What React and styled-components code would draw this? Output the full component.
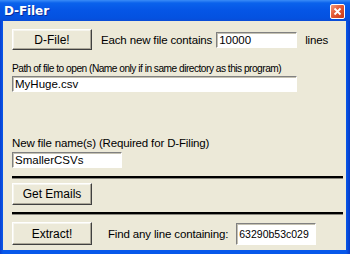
import styled, { createGlobalStyle } from 'styled-components';

const GlobalStyle = createGlobalStyle`
  html, body {
    margin: 0;
    padding: 0;
  }
  body {
    width: 350px;
    height: 254px;
    overflow: hidden;
    background: #fff;
    font-family: "Liberation Sans", Arial, sans-serif;
  }
`;

const Window = styled.div`
  width: 350px;
  height: 254px;
  display: flex;
  flex-direction: column;
  background: linear-gradient(90deg, #0a3fd0 0px, #0758ea 3px, #0758ea 346px, #0639c6 350px);
`;

const TitleBar = styled.div`
  height: 21px;
  flex: none;
  display: flex;
  align-items: center;
  justify-content: space-between;
  padding: 0 5px 0 4px;
  background: linear-gradient(180deg, #3a8cf7 0px, #0a62ec 3px, #0556e6 10px, #0452e0 18px, #0a4bd6 21px);
`;

const Title = styled.span`
  color: #fff;
  font-family: "DejaVu Sans", "Liberation Sans", sans-serif;
  font-weight: bold;
  font-size: 12px;
  letter-spacing: -0.1px;
  text-shadow: 1px 1px 0 #0a2c9a;
  margin-top: 1px;
`;

const CloseButton = styled.div`
  width: 13px;
  height: 13px;
  border: 1px solid #fff;
  border-radius: 2px;
  background: linear-gradient(135deg, #f39a7c 0%, #e45a35 45%, #c8391a 100%);
  display: flex;
  align-items: center;
  justify-content: center;
  margin-top: 2px;
`;

const Frame = styled.div`
  flex: 1;
  display: flex;
  padding: 0 4px 4px 3px;
`;

const Body = styled.div`
  flex: 1;
  background: #ece9d8;
  display: flex;
  flex-direction: column;
  padding: 8px 3px 0 9px;
  font-size: 11.5px;
  color: #000;
`;

const Row = styled.div`
  display: flex;
  align-items: center;
  margin-top: ${(p) => p.$mt || 0}px;
`;

const Button = styled.button`
  width: 80px;
  height: ${(p) => p.$h || 21}px;
  box-sizing: border-box;
  flex: none;
  padding: 0;
  background: #ece9d8;
  font-family: "Liberation Sans", Arial, sans-serif;
  font-size: 12px;
  color: #000;
  border: 1px solid;
  border-color: #fff #404040 #404040 #fff;
  box-shadow: inset -1px -1px 0 #aca899, inset 1px 1px 0 #f6f5ee;
`;

const Label = styled.span`
  white-space: nowrap;
  margin-left: ${(p) => p.$ml || 0}px;
  margin-top: ${(p) => p.$mt || 0}px;
  font-size: 11.5px;
  letter-spacing: -0.15px;
`;

const NarrowLabel = styled.div`
  white-space: nowrap;
  font-family: "Liberation Sans", Arial, sans-serif;
  font-size: 11px;
  letter-spacing: -0.55px;
  transform: scaleX(0.925);
  transform-origin: left center;
  margin-top: ${(p) => p.$mt || 0}px;
`;

const Input = styled.div`
  width: ${(p) => p.$w}px;
  height: ${(p) => p.$h || 16}px;
  box-sizing: border-box;
  flex: none;
  background: #fff;
  border: 1px solid;
  border-color: #808080 #fff #fff #808080;
  box-shadow: inset 1px 1px 0 #c4c1b2;
  padding: 0 0 0 2px;
  display: flex;
  align-items: center;
  font-size: ${(p) => p.$fs || 11.5}px;
  white-space: nowrap;
  overflow: hidden;
  margin-left: ${(p) => p.$ml || 0}px;
  margin-top: ${(p) => p.$mt || 0}px;
`;

const Separator = styled.div`
  height: 2px;
  margin-top: ${(p) => p.$mt || 0}px;
  background: #000;
  box-shadow: 0 1px 0 #8a887e;
`;

export default function App() {
  return (
    <>
      <GlobalStyle />
      <Window>
        <TitleBar>
          <Title>D-Filer</Title>
          <CloseButton>
            <svg width="9" height="9" viewBox="0 0 9 9">
              <path d="M1.5 1.5 L7.5 7.5 M7.5 1.5 L1.5 7.5" stroke="#fff" strokeWidth="1.8" />
            </svg>
          </CloseButton>
        </TitleBar>
        <Frame>
          <Body>
            <Row>
              <Button>D-File!</Button>
              <Label $ml={9}>Each new file contains</Label>
              <Input $w={81} $ml={4}>10000</Input>
              <Label $ml={8}>lines</Label>
            </Row>
            <NarrowLabel $mt={12}>Path of file to open (Name only if in same directory as this program)</NarrowLabel>
            <Input $w={285} $mt={2}>MyHuge.csv</Input>
            <Label as="div" $mt={45}>New file name(s) (Required for D-Filing)</Label>
            <Input $w={110} $mt={3}>SmallerCSVs</Input>
            <Separator $mt={8} />
            <Row $mt={5}>
              <Button $h={22}>Get Emails</Button>
            </Row>
            <Separator $mt={7} />
            <Row $mt={8}>
              <Button $h={23}>Extract!</Button>
              <Label $ml={16}>Find any line containing:</Label>
              <Input $w={80} $h={22} $ml={8} $fs={10.5}>63290b53c029</Input>
            </Row>
          </Body>
        </Frame>
      </Window>
    </>
  );
}
